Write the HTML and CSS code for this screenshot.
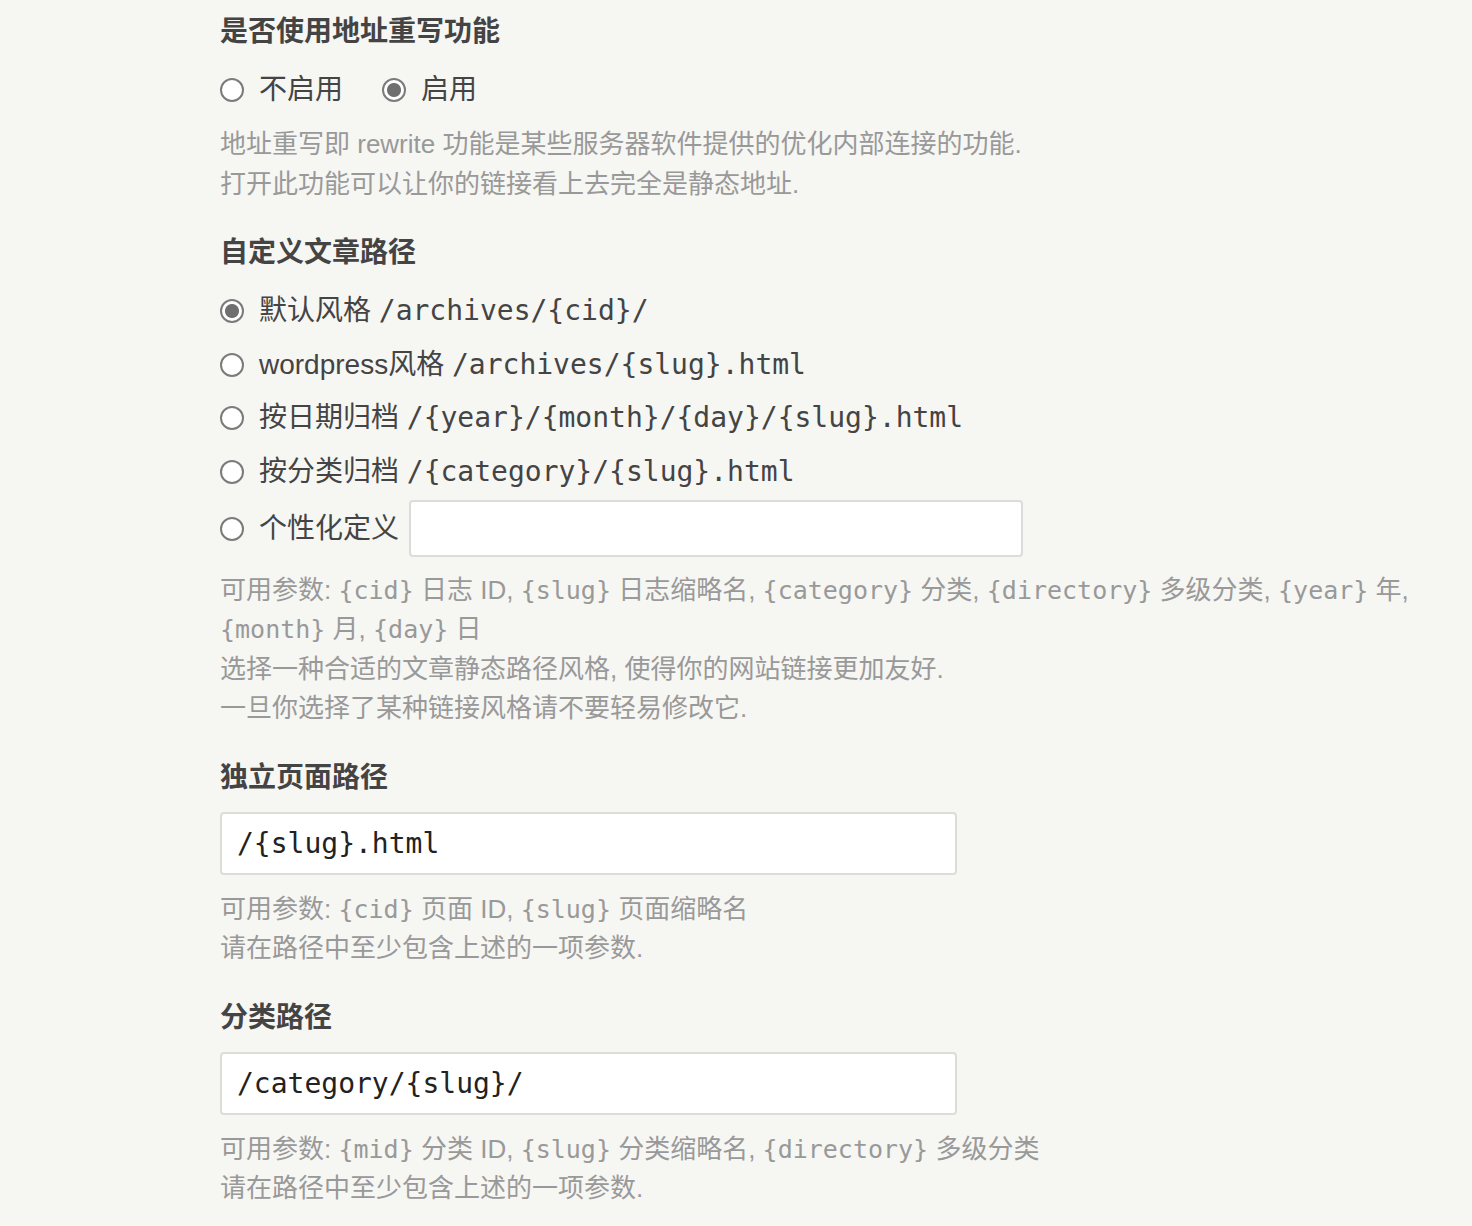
FILE: index.html
```html
<!DOCTYPE html>
<html lang="zh-CN">
<head>
  <meta charset="UTF-8">
  <title>永久链接设置</title>
  <link rel="stylesheet" href="styles.css">
</head>
<body>

  <form class="typecho-option-form">
    <ul class="options">

      <!-- 地址重写 -->
      <li class="option">
        <label class="option-label">是否使用地址重写功能</label>
        <div class="radio-inline">
          <span class="radio-item">
            <input type="radio" name="rewrite" id="rewrite-0" value="0">
            <label for="rewrite-0">不启用</label>
          </span>
          <span class="radio-item">
            <input type="radio" name="rewrite" id="rewrite-1" value="1" checked>
            <label for="rewrite-1">启用</label>
          </span>
        </div>
        <p class="description">地址重写即 rewrite 功能是某些服务器软件提供的优化内部连接的功能.<br>打开此功能可以让你的链接看上去完全是静态地址.</p>
      </li>

      <!-- 文章路径 -->
      <li class="option">
        <label class="option-label">自定义文章路径</label>
        <ul class="radio-list">
          <li>
            <input type="radio" name="postPattern" id="post-0" checked>
            <label for="post-0">默认风格 <code>/archives/{cid}/</code></label>
          </li>
          <li>
            <input type="radio" name="postPattern" id="post-1">
            <label for="post-1">wordpress风格 <code>/archives/{slug}.html</code></label>
          </li>
          <li>
            <input type="radio" name="postPattern" id="post-2">
            <label for="post-2">按日期归档 <code>/{year}/{month}/{day}/{slug}.html</code></label>
          </li>
          <li>
            <input type="radio" name="postPattern" id="post-3">
            <label for="post-3">按分类归档 <code>/{category}/{slug}.html</code></label>
          </li>
          <li class="custom-row">
            <input type="radio" name="postPattern" id="post-4">
            <label for="post-4">个性化定义</label>
            <input type="text" class="text custom-input" name="customPattern">
          </li>
        </ul>
        <p class="description">可用参数: <code>{cid}</code> 日志 ID, <code>{slug}</code> 日志缩略名, <code>{category}</code> 分类, <code>{directory}</code> 多级分类, <code>{year}</code> 年, <code>{month}</code> 月, <code>{day}</code> 日<br>选择一种合适的文章静态路径风格, 使得你的网站链接更加友好.<br>一旦你选择了某种链接风格请不要轻易修改它.</p>
      </li>

      <!-- 页面路径 -->
      <li class="option">
        <label class="option-label">独立页面路径</label>
        <input type="text" class="text mono" name="pagePattern" value="/{slug}.html">
        <p class="description">可用参数: <code>{cid}</code> 页面 ID, <code>{slug}</code> 页面缩略名<br>请在路径中至少包含上述的一项参数.</p>
      </li>

      <!-- 分类路径 -->
      <li class="option">
        <label class="option-label">分类路径</label>
        <input type="text" class="text mono" name="categoryPattern" value="/category/{slug}/">
        <p class="description">可用参数: <code>{mid}</code> 分类 ID, <code>{slug}</code> 分类缩略名, <code>{directory}</code> 多级分类<br>请在路径中至少包含上述的一项参数.</p>
      </li>

    </ul>
  </form>

</body>
</html>
```

FILE: styles.css
```css
body {
  margin: 0;
  background-color: #f6f6f3;
  color: #444;
  font-family: "Liberation Sans", "Noto Sans CJK SC", sans-serif;
  font-size: 28px;
  line-height: 42px;
}

.typecho-option-form {
  padding: 11px 0 40px 220px;
  width: 1240px;
}

.options,
.radio-list {
  list-style: none;
  margin: 0;
  padding: 0;
}

.option {
  margin-bottom: 28px;
}

.option-label {
  display: block;
  font-weight: bold;
  margin-bottom: 16px;
}

code,
.mono {
  font-family: "DejaVu Sans Mono", monospace;
}

/* 单选框 */
input[type="radio"] {
  appearance: none;
  -webkit-appearance: none;
  box-sizing: border-box;
  width: 24px;
  height: 24px;
  margin: 0 15px 0 0;
  border: 2px solid #7b7b7b;
  border-radius: 50%;
  background: #fff;
  flex: none;
}

input[type="radio"]:checked {
  background: radial-gradient(circle, #6f6f6f 0 6.5px, #fff 7.5px);
}

.radio-inline {
  display: flex;
  gap: 39px;
}

.radio-item,
.radio-list li {
  display: flex;
  align-items: center;
  height: 42px;
}

.radio-list li {
  margin-bottom: 11.7px;
}

.radio-list li:last-child {
  margin-bottom: 0;
}

.radio-list label,
.radio-list code {
  line-height: 42px;
}

.radio-list .custom-row {
  height: 56px;
  margin-top: -4px;
}

/* 文本框 */
input.text {
  box-sizing: border-box;
  display: block;
  width: 737px;
  height: 63px;
  margin-top: -3px;
  padding: 0 15px;
  border: 2px solid #dcdcd8;
  border-radius: 4px;
  background: #fff;
  color: #222;
  font-size: 28px;
}

input.custom-input {
  width: 614px;
  height: 57px;
  margin: 0 0 0 10px;
}

.description {
  margin: 14px 0 0;
  color: #999;
  font-size: 26px;
  line-height: 39.5px;
}

input.text + .description {
  margin-top: 15px;
}

.description code {
  font-size: 25px;
}
```
